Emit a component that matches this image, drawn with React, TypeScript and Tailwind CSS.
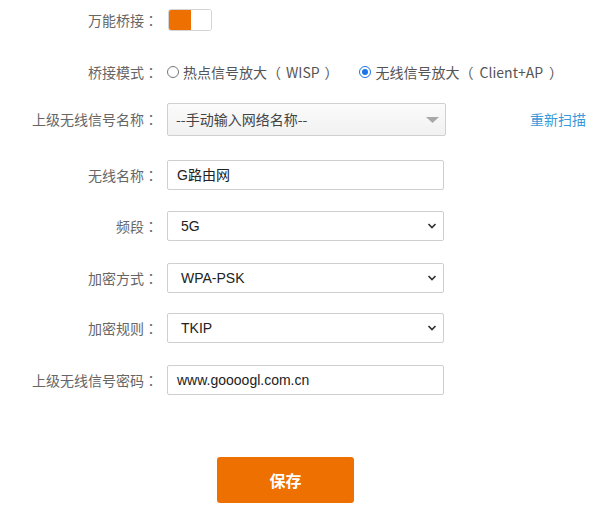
import React from "react";

const labelCls =
  "w-[158px] shrink-0 text-right text-[14px] text-[#666] leading-none whitespace-nowrap";
const fontCls = "[font-family:'Liberation_Sans','Noto_Sans_CJK_SC',sans-serif]";
const tc = "[font-family:'Noto_Sans_CJK_TC',sans-serif]";

function Chevron() {
  return (
    <svg
      className="pointer-events-none absolute right-[6px] top-1/2 -translate-y-1/2"
      width="10"
      height="7"
      viewBox="0 0 10 7"
    >
      <path d="M1.5 1.5 L5 5 L8.5 1.5" fill="none" stroke="#333" strokeWidth="1.7" />
    </svg>
  );
}

function Row({ label, children, className = "" }: { label: string; children: React.ReactNode; className?: string }) {
  return (
    <div className={`flex items-center ${className}`}>
      <div className={labelCls}>
        <span className="[font-family:'Noto_Sans_CJK_SC',sans-serif]">{label}</span>
        <span className={tc}>：</span>
      </div>
      <div className="ml-[9px] flex items-center">{children}</div>
    </div>
  );
}

function SelectBox({ value }: { value: string }) {
  return (
    <div className="relative h-[30px] w-[277px] rounded-[2px] border border-[#cfcfcf] bg-white flex items-center pl-[13px] text-[14px] text-[#222]">
      {value}
      <Chevron />
    </div>
  );
}

function InputBox({ value }: { value: string }) {
  return (
    <div className="h-[30px] w-[277px] rounded-[2px] border border-[#cfcfcf] bg-white flex items-center pl-[9px] text-[14px] text-[#222]">
      {value}
    </div>
  );
}

export default function App() {
  return (
    <div className={`w-[600px] h-[529px] bg-white overflow-hidden ${fontCls}`}>
      <div className="flex flex-col pt-[9px]">
        <Row label="万能桥接" className="h-[22px]">
          <div className="ml-[1px] flex h-[22px] w-[44px] overflow-hidden rounded-[3px] border border-[#d4d4d4]">
            <div className="h-full w-[22px] bg-[#ee7000]" />
            <div className="h-full flex-1 bg-white" />
          </div>
        </Row>

        <Row label="桥接模式" className="mt-[30px] h-[22px]">
          <div className="flex items-center text-[14px] text-[#555] [font-family:'Noto_Sans_CJK_SC',sans-serif]">
            <span className="h-[12px] w-[12px] rounded-full border border-[#777] bg-white" />
            <span className="ml-[4px] leading-none whitespace-nowrap">
              热点信号放大<span className={tc}>（</span>
              <span className="px-[5px]">WISP</span>
              <span className={tc}>）</span>
            </span>
            <span className="ml-[20px] flex h-[12px] w-[12px] items-center justify-center rounded-full border border-[#1a73e8] bg-white">
              <span className="h-[6px] w-[6px] rounded-full bg-[#1a73e8]" />
            </span>
            <span className="ml-[5px] leading-none whitespace-nowrap">
              无线信号放大<span className={tc}>（</span>
              <span className="px-[6px]">Client+AP</span>
              <span className={tc}>）</span>
            </span>
          </div>
        </Row>

        <Row label="上级无线信号名称" className="mt-[20px] h-[33px]">
          <div className="relative flex h-[33px] w-[279px] items-center rounded-[2px] border border-[#d0d0d0] bg-gradient-to-b from-[#fbfbfb] to-[#f1f1f1] pl-[8px] text-[14px] text-[#444] [font-family:'Noto_Sans_CJK_SC',sans-serif]">
            --手动输入网络名称--
            <svg
              className="pointer-events-none absolute right-[6px] top-[13px]"
              width="13"
              height="7"
              viewBox="0 0 13 7"
            >
              <path d="M0 0 L13 0 L6.5 6 Z" fill="#a8a8a8" />
            </svg>
          </div>
          <span className="ml-[84px] text-[14px] text-[#3a99d8] [font-family:'Noto_Sans_CJK_SC',sans-serif]">
            重新扫描
          </span>
        </Row>

        <Row label="无线名称" className="mt-[24px] h-[30px]">
          <InputBox value="G路由网" />
        </Row>

        <Row label="频段" className="mt-[21px] h-[30px]">
          <SelectBox value="5G" />
        </Row>

        <Row label="加密方式" className="mt-[22px] h-[30px]">
          <SelectBox value="WPA-PSK" />
        </Row>

        <Row label="加密规则" className="mt-[20px] h-[30px]">
          <SelectBox value="TKIP" />
        </Row>

        <Row label="上级无线信号密码" className="mt-[22px] h-[30px]">
          <InputBox value="www.goooogl.com.cn" />
        </Row>

        <div className="ml-[217px] mt-[62px] flex h-[46px] w-[137px] items-center justify-center rounded-[3px] bg-[#ee7000] text-[16px] font-bold text-white [font-family:'Noto_Sans_CJK_SC',sans-serif]">
          保存
        </div>
      </div>
    </div>
  );
}
